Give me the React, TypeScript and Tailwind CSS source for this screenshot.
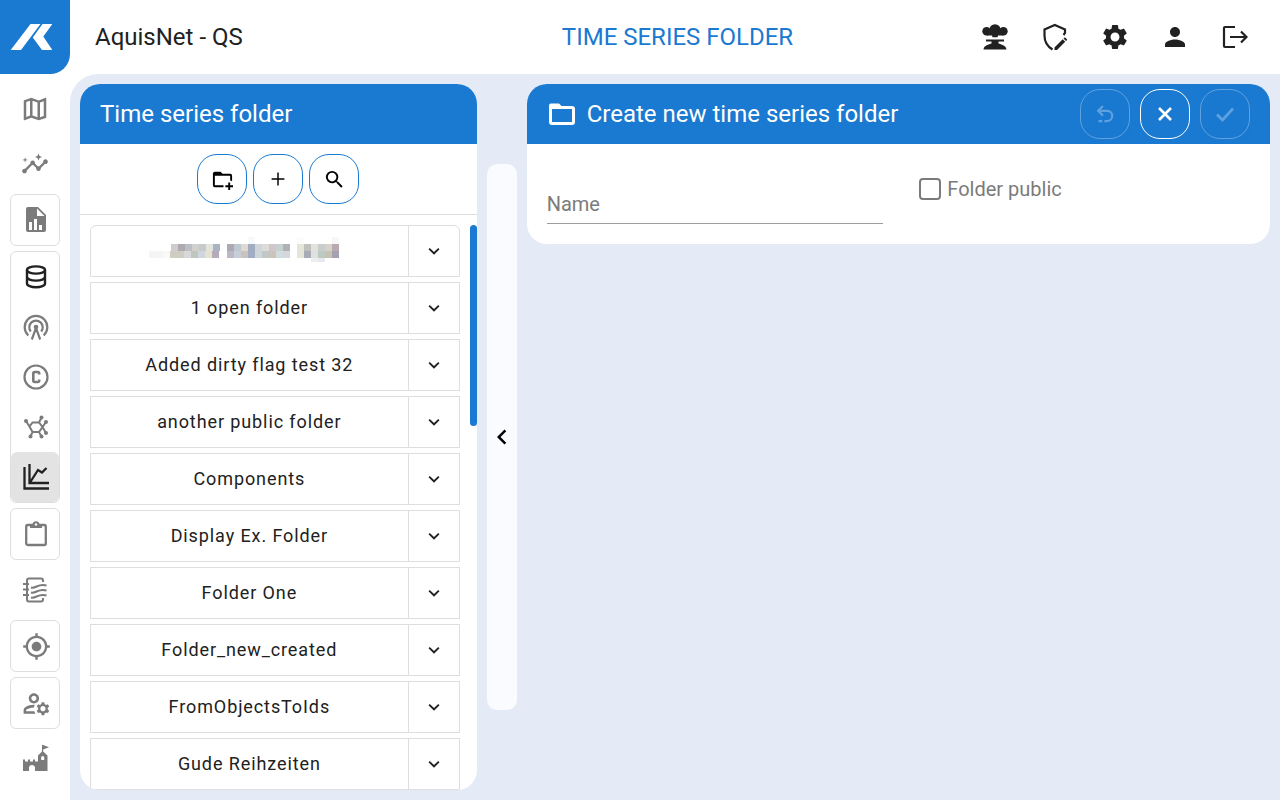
import React, { useState } from "react";
import {
  MdInsights,
  MdOutlineMap,
  MdMyLocation,
  MdSettings,
  MdPerson,
  MdOutlineManageAccounts,
  MdSearch,
} from "react-icons/md";

const stroke = { fill: "none", stroke: "currentColor", strokeWidth: 2 };

function FileChartIcon() {
  return (
    <svg viewBox="0 0 20 26" className="h-[26px] w-5" fill="currentColor">
      <path fillRule="evenodd" d="M2 0H12L20 8V23a2 2 0 0 1-2 2H2a2 2 0 0 1-2-2V2a2 2 0 0 1 2-2ZM11 1.500V9H18.500ZM3 15V23H6V15ZM8 12V23H11V12ZM13 18V23H16V18Z" />
    </svg>
  );
}

function DatabaseIcon() {
  return (
    <svg viewBox="0 0 22 24" className="h-6 w-[22px]" {...stroke} strokeWidth={2.4}>
      <ellipse cx="11" cy="5" rx="9" ry="3.600" />
      <path d="M2 5V18.500C2 20.700 6 22.300 11 22.300S20 20.700 20 18.500V5M2 11.800C2 14 6 15.600 11 15.600S20 14 20 11.800" />
    </svg>
  );
}

function AntennaIcon() {
  return (
    <svg viewBox="0 0 26 26" className="size-[26px]" {...stroke} strokeWidth={2.2}>
      <path d="M5.300 21.500A11.300 11.300 0 1 1 20.700 21.500M7.800 17.500A6.700 6.700 0 1 1 18.200 17.500M8.800 25.500L13 14L17.200 25.500" />
      <circle cx="13" cy="13" r="2.300" fill="currentColor" stroke="none" />
    </svg>
  );
}

function CopyrightIcon() {
  return (
    <svg viewBox="0 0 26 26" className="size-[26px]" {...stroke} strokeWidth={2.2}>
      <circle cx="13" cy="13" r="11.500" />
      <path strokeWidth="2.600" d="M16.200 10.500V9.500Q16.200 8 14.700 8H11.800Q10.300 8 10.300 9.500V16.500Q10.300 18 11.800 18H14.700Q16.200 18 16.200 16.500V15.500" />
    </svg>
  );
}

function MoleculeIcon() {
  return (
    <svg viewBox="0 0 24 24" className="size-6" {...stroke}>
      <path d="M2 6L5.500 11.500L8.500 7.500H15L18.500 12L15 17H8.500L5.500 11.500M15 7.500L17.500 2.500M18.500 12L22 7M18.500 12L22 18M15 17L17.500 21.500M8.500 17L6.500 21.500" />
      <g fill="currentColor" stroke="none">
        <circle cx="2" cy="6" r="2" />
        <circle cx="17.500" cy="2.500" r="2" />
        <circle cx="22" cy="7" r="2" />
        <circle cx="22" cy="18" r="2" />
        <circle cx="17.500" cy="21.500" r="2" />
        <circle cx="6.500" cy="21.500" r="2" />
      </g>
    </svg>
  );
}

function TimeSeriesIcon() {
  return (
    <svg viewBox="0 0 26 26" className="size-[26px]" {...stroke} strokeWidth={2.3}>
      <path d="M1.500 3V24.500H26M6.500 0V19H26M7 18.500L15 6L19 8.500L23.500 4" />
    </svg>
  );
}

function ClipboardIcon() {
  return (
    <svg viewBox="0 0 22 27" className="h-[27px] w-[22px]">
      <rect x="1.200" y="4" width="19.600" height="20" rx="1.500" {...stroke} strokeWidth={2.300} />
      <path fill="currentColor" d="M5 3H7.500A3.600 3.600 0 0 1 14.500 3H17V7H5Z" />
      <circle cx="11" cy="3.500" r="1.200" fill="#fff" />
    </svg>
  );
}

function SoilIcon() {
  return (
    <svg viewBox="0 0 26 26" className="size-[26px]" {...stroke}>
      <path d="M21 5V3.500Q21 1.500 19 1.500H7Q5 1.500 5 3.500V22.500Q5 24.500 7 24.500H19Q21 24.500 21 22.500V21M1 7H7M1 12.500H7M1 18H7M9 10.500C14 12 16 6 24.500 8.500M9 15.500C14 17 16 11 24.500 13.500M9 20.500C14 22 16 16 24.500 18.500" />
    </svg>
  );
}

function CastleIcon() {
  return (
    <svg viewBox="0 1 27 29" className="h-[29px] w-[27px]" fill="currentColor">
      <path d="M1 15.500H3V17.500H6V15.500H8V17.500H11V15.500H13V17.500H16V11.500L20 7.500V1H21.200L27 3.300L21.200 5.600V7.500L25.500 11.500V27H13V23A3.200 3.200 0 0 0 7 23V27H1Z" />
      <path fill="#fff" d="M19.200 16V13.500A1.500 1.500 0 0 1 22.200 13.500V16Z" />
    </svg>
  );
}

function ExplosionIcon() {
  return (
    <svg viewBox="0 0 26 26" className="size-[26px]" fill="currentColor">
      <circle cx="4.600" cy="7.300" r="4.300" />
      <circle cx="13" cy="5.800" r="5.600" />
      <circle cx="21.400" cy="7.300" r="4.300" />
      <path d="M4.600 6H21.400V11.600H16L15.500 13.200H10.500L10 11.600H4.600ZM4 15.500H22V17.500H16.500V19.500C19 20.500 24 21 24.500 25.500H1.500C2 21 7 20.500 9.500 19.500V17.500H4Z" />
    </svg>
  );
}

function ShieldEditIcon() {
  return (
    <svg viewBox="0 0 26 28" className="h-7 w-[26px]">
      <path {...stroke} strokeWidth={2.200} d="M10.500 26.500C5.500 23.500 2.500 18.500 2.500 12.500V6.500L12.800 2L23 6.500V10L21.500 12" />
      <path fill="currentColor" d="M12.500 24.500L20.700 16.300L23.200 18.800L15 27H12.500ZM21.500 15.500L22.300 14.700Q22.800 14.200 23.400 14.700L24.900 16.200Q25.300 16.700 24.900 17.200L24 18Z" />
    </svg>
  );
}

function ExitIcon() {
  return (
    <svg viewBox="0 0 26 24" className="h-6 w-[26px]" {...stroke} strokeWidth={2.200}>
      <path d="M13 2H3Q2 2 2 3V21Q2 22 3 22H13M8 12H24M19 6.500L24.500 12L19 17.500" />
    </svg>
  );
}

function FolderIcon() {
  return (
    <svg viewBox="0 0 30 30" className="size-[30px]">
      <path {...stroke} strokeWidth={3} d="M3.500 8.500V23Q3.500 24.500 5 24.500H25Q26.500 24.500 26.500 23V10Q26.500 8.500 25 8.500Z" />
      <path fill="currentColor" d="M2 10V6.500Q2 4.500 4 4.500H12L15 7.500V10Z" />
    </svg>
  );
}

function Glyph({ className, d }: { className: string; d: string }) {
  return (
    <svg viewBox="0 0 24 24" className={className} fill="currentColor">
      <path d={d} />
    </svg>
  );
}

type NavItem = { label: string; icon: React.ReactNode; dark?: boolean; active?: boolean };

const navGroups: { boxed?: boolean; items: NavItem[] }[] = [
  { items: [{ label: "Map", icon: <MdOutlineMap size={30} /> }] },
  { items: [{ label: "Insights", icon: <MdInsights size={28} /> }] },
  { boxed: true, items: [{ label: "Reports", icon: <FileChartIcon /> }] },
  {
    boxed: true,
    items: [
      { label: "Data", icon: <DatabaseIcon />, dark: true },
      { label: "Stations", icon: <AntennaIcon /> },
      { label: "Components", icon: <CopyrightIcon /> },
      { label: "Compounds", icon: <MoleculeIcon /> },
      { label: "Time series", icon: <TimeSeriesIcon />, dark: true, active: true },
    ],
  },
  { boxed: true, items: [{ label: "Tasks", icon: <ClipboardIcon /> }] },
  { items: [{ label: "Logbook", icon: <SoilIcon /> }] },
  { boxed: true, items: [{ label: "Location", icon: <MdMyLocation size={29} /> }] },
  { boxed: true, items: [{ label: "Accounts", icon: <MdOutlineManageAccounts size={31} /> }] },
  { items: [{ label: "Authority", icon: <CastleIcon /> }] },
];

const headerActions: NavItem[] = [
  { label: "Explosion", icon: <ExplosionIcon /> },
  { label: "Privacy", icon: <ShieldEditIcon /> },
  { label: "Settings", icon: <MdSettings size={30} /> },
  { label: "Profile", icon: <MdPerson size={30} /> },
  { label: "Logout", icon: <ExitIcon /> },
];

const folders = [
  "",
  "1 open folder",
  "Added dirty flag test 32",
  "another public folder",
  "Components",
  "Display Ex. Folder",
  "Folder One",
  "Folder_new_created",
  "FromObjectsToIds",
  "Gude Reihzeiten",
];

// censored folder name: [start column, row, colours of the 7px blocks]
const mosaic: [number, number, string[]][] = [
  [14, 0, ["#f6f9f9"]],
  [21, 0, ["#fcfcfa"]],
  [26, 0, ["#f8f7f7"]],
  [3, 1, ["#cfcbcf", "#aeaab0", "#bcbec6", "#d0d0ce", "#c7cacb", "#e1e5db", "#a9b3c1"]],
  [11, 1, ["#aea8b5", "#bdc9ce", "#e0d9d3", "#a1adbd", "#cfd5d8", "#dcdcda", "#d0c7c8", "#c7d0d1", "#aeb2b4"]],
  [21, 1, ["#e6e5da", "#bfc1bf", "#e2e3df", "#c9cecc", "#d3d2cd", "#b9aab1"]],
  [0, 2, ["#f5f5f5", "#f5f5f5", "#f9f9f7", "#cfcdc2", "#cfcdc2", "#d9d7da", "#bfc6bd", "#d0d6df", "#e7e2cf", "#b5acb9"]],
  [11, 2, ["#bdb8c5", "#c5ced9", "#cbc2bb", "#a1adc3", "#cfd6d9", "#c2c7ca", "#cec3b8", "#d1dcde", "#d4d8dc"]],
  [21, 2, ["#e6e5d8", "#a8acb8", "#e0e0dc", "#bfc9c4", "#c5c2b2", "#a6a1b1"]],
  [23, 3, ["#eeeeee", "#e8e9ec"]],
];

function Mosaic() {
  return (
    <svg viewBox="0 0 200 28" className="h-7 w-[200px]" shapeRendering="crispEdges">
      {mosaic.map(([col, row, colors]) =>
        colors.map((c, i) => <rect key={`${row}-${col + i}`} x={(col + i) * 7 + (col > 0 ? 1 : 0)} y={row * 7} width="7" height={row === 3 ? 4 : 7} fill={c} />)
      )}
    </svg>
  );
}

export default function App() {
  const [name, setName] = useState("");
  const [isPublic, setIsPublic] = useState(false);

  return (
    <div className="flex h-screen flex-col bg-white font-[Roboto,sans-serif] text-[#212121]">
      <header className="flex h-[74px] shrink-0 items-center">
        <a href="#" aria-label="Home" className="flex h-full w-[70px] items-center rounded-br-[20px] bg-[#1a79d0] pl-[10px] text-white">
          <svg viewBox="0 0 42 26" className="h-[26px] w-[42px]" fill="currentColor">
            <path d="M20.500 0H30.500L11 26H0.700ZM32.500 0H42.300L33.300 12.500L42.300 26H32L22.800 13.500Z" />
          </svg>
        </a>
        <div className="grid flex-1 grid-cols-3 items-center pr-5 pl-[25px] text-2xl">
          <p>AquisNet - QS</p>
          <h1 className="text-center text-[#1a79d0]">TIME SERIES FOLDER</h1>
          <div className="flex justify-end gap-[10px]">
            {headerActions.map((a) => (
              <button key={a.label} aria-label={a.label} className="flex size-[50px] items-center justify-center">
                {a.icon}
              </button>
            ))}
          </div>
        </div>
      </header>

      <div className="flex min-h-0 flex-1">
        <nav className="flex w-[70px] shrink-0 flex-col gap-[5px] p-[10px] text-[#7b7b7b]">
          {navGroups.map((g, i) => (
            <div key={i} className={g.boxed ? "rounded-md border border-[#dedede]" : ""}>
              {g.items.map((item) => (
                <button
                  key={item.label}
                  aria-label={item.label}
                  className={`flex h-[50px] w-full items-center justify-center rounded-md ${g.boxed ? "pl-[2px]" : ""} ${item.dark ? "text-[#212121]" : ""} ${item.active ? "bg-[#e3e3e3]" : ""}`}
                >
                  {item.icon}
                </button>
              ))}
            </div>
          ))}
        </nav>

        <main className="flex min-w-0 flex-1 gap-[10px] rounded-tl-[28px] bg-[#e4eaf6] p-[10px]">
          <section className="flex w-1/3 shrink-0 flex-col overflow-hidden rounded-[20px] bg-white">
            <h2 className="flex h-[60px] shrink-0 items-center bg-[#1a79d0] px-5 text-2xl text-white">Time series folder</h2>
            <div className="flex shrink-0 justify-center gap-[6px] border-b border-[#dedede] py-[10px] text-black">
              <button aria-label="New folder" className="flex size-[50px] items-center justify-center rounded-[20px] border border-[#1a79d0]">
                <Glyph className="size-[23px]" d="M13 19c0 .3 0 .7.100 1H4a2 2 0 0 1-2-2V6c0-1.100.900-2 2-2h6l2 2h8a2 2 0 0 1 2 2v5.800c-.6-.3-1.300-.6-2-.7V8H4v10h9.100c-.1.300-.1.700-.1 1m7-1v-3h-2v3h-3v2h3v3h2v-3h3v-2z" />
              </button>
              <button aria-label="Add" className="flex size-[50px] items-center justify-center rounded-[20px] border border-[#1a79d0]">
                <Glyph className="size-[22px]" d="M19 12.800h-6.200V19h-1.600v-6.200H5v-1.600h6.200V5h1.600v6.200H19z" />
              </button>
              <button aria-label="Search" className="flex size-[50px] items-center justify-center rounded-[20px] border border-[#1a79d0]">
                <MdSearch size={23} />
              </button>
            </div>
            <div className="flex min-h-0 flex-1 justify-between pt-[10px] pl-[10px]">
              <ul className="flex flex-1 flex-col gap-[5px] overflow-hidden">
                {folders.map((f, i) => (
                  <li key={i} className={`flex h-[52px] shrink-0 border border-[#dedede] ${i === 0 ? "rounded-t-md" : ""}`}>
                    <button aria-label={f || "Folder"} className="flex flex-1 items-center justify-center text-lg tracking-wider">
                      {f || <Mosaic />}
                    </button>
                    <button aria-label="Expand" className="flex w-[51px] items-center justify-center border-l border-[#dedede]">
                      <Glyph className="size-[22px]" d="M7.400 8.600 12 13.200l4.600-4.600L18 10l-6 6-6-6z" />
                    </button>
                  </li>
                ))}
              </ul>
              <div className="ml-[10px] h-[201px] w-[7px] rounded-full bg-[#1a79d0]" />
            </div>
          </section>

          <button aria-label="Collapse" className="my-20 flex w-[30px] shrink-0 items-center justify-center rounded-[10px] bg-[#f9fbfe] text-black">
            <Glyph className="size-[30px]" d="M15.400 16.600 10.800 12l4.600-4.600L14 6l-6 6 6 6z" />
          </button>

          <form className="min-w-0 flex-1 self-start overflow-hidden rounded-[20px] bg-white">
            <div className="flex h-[60px] items-center gap-[10px] bg-[#1a79d0] px-5 text-white">
              <FolderIcon />
              <h2 className="flex-1 text-2xl">Create new time series folder</h2>
              <button type="reset" disabled aria-label="Undo" className="flex size-[50px] items-center justify-center rounded-[20px] border border-white opacity-30">
                <Glyph className="size-[26px]" d="M14 19.500h-2.500v-2H14a3.700 3.700 0 0 0 0-7.400H8.100l2.700 2.700-1.400 1.400L4.300 9.100 9.400 4l1.400 1.400-2.700 2.700H14a5.700 5.700 0 0 1 0 11.400ZM6 17.500h3.500v2H6z" />
              </button>
              <button type="button" aria-label="Cancel" className="flex size-[50px] items-center justify-center rounded-[20px] border border-white">
                <svg viewBox="0 0 24 24" className="size-6" {...stroke} strokeWidth={2.600}>
                  <path d="M6 6L18 18M18 6L6 18" />
                </svg>
              </button>
              <button type="submit" disabled aria-label="Save" className="flex size-[50px] items-center justify-center rounded-[20px] border border-white opacity-30">
                <svg viewBox="0 0 24 24" className="size-6" {...stroke} strokeWidth={2.600}>
                  <path d="M4 12.500L9.500 18L20 6.500" />
                </svg>
              </button>
            </div>
            <div className="grid grid-cols-2 gap-[30px] p-5 text-xl text-[#7b7b7b]">
              <div className="relative pt-5">
                <input
                  id="name"
                  value={name}
                  onChange={(e) => setName(e.target.value)}
                  className="h-10 w-full border-b border-[#9e9e9e] outline-none"
                />
                {name === "" && (
                  <label htmlFor="name" className="pointer-events-none absolute bottom-[6px] left-0">
                    Name
                  </label>
                )}
              </div>
              <label className="flex h-[50px] items-center gap-[6px] pl-[6px]">
                <input
                  type="checkbox"
                  checked={isPublic}
                  onChange={(e) => setIsPublic(e.target.checked)}
                  className="size-[22px] appearance-none rounded-sm border-2 border-[#7b7b7b] checked:bg-[#1a79d0]"
                />
                Folder public
              </label>
            </div>
          </form>
        </main>
      </div>
    </div>
  );
}
